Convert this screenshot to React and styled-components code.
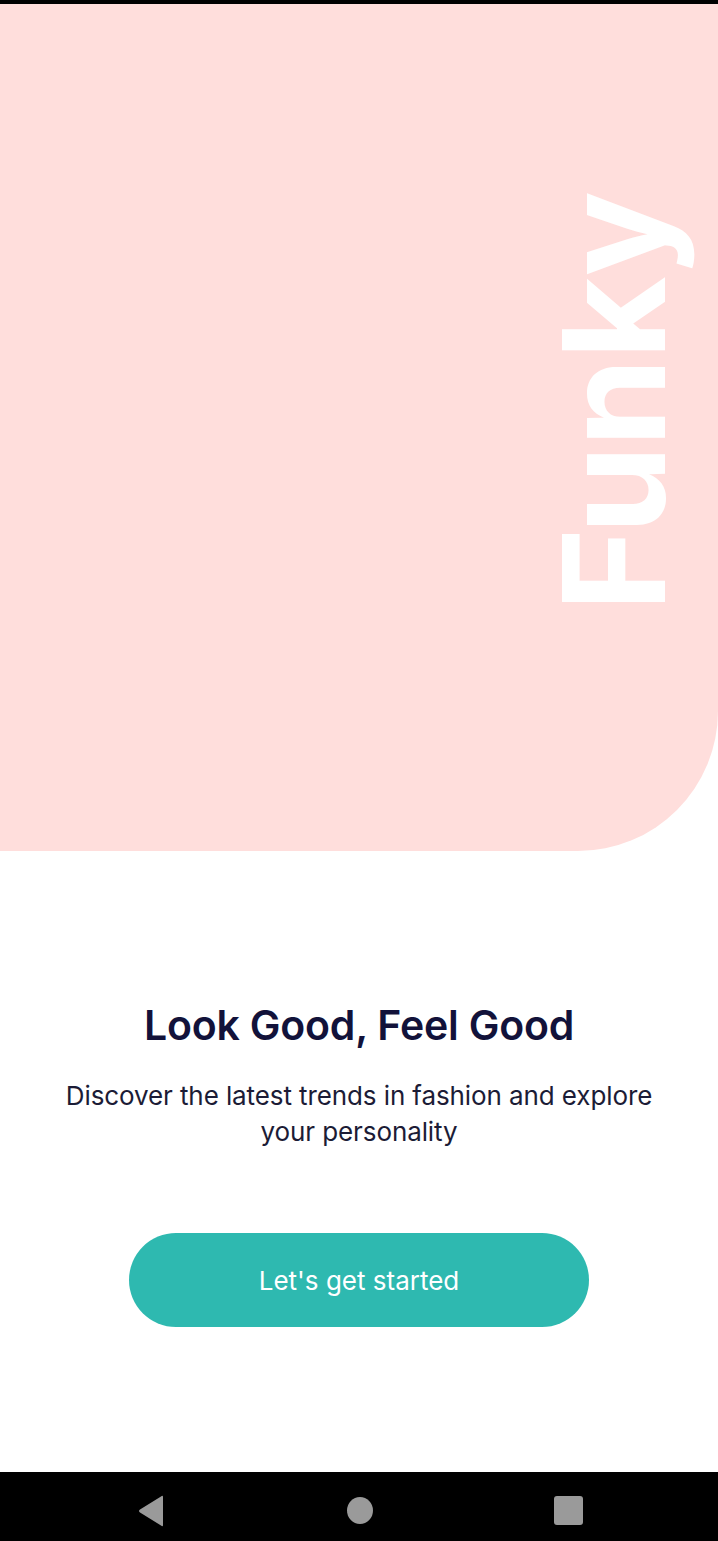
import React from "react";
import styled, { createGlobalStyle } from "styled-components";

const GlobalStyle = createGlobalStyle`
  * {
    box-sizing: border-box;
  }
  html, body {
    margin: 0;
    padding: 0;
    background: #ffffff;
    font-family: Inter, "Noto Sans", "Liberation Sans", sans-serif;
  }
`;

const Screen = styled.div`
  display: flex;
  flex-direction: column;
  height: 1541px;
  background: #ffffff;
  overflow: hidden;
`;

const StatusBar = styled.div`
  height: 4px;
  background: #000000;
  flex-shrink: 0;
`;

const Hero = styled.div`
  height: 847px;
  flex-shrink: 0;
  background: #ffdedc;
  border-bottom-right-radius: 140px;
  display: flex;
  justify-content: flex-end;
  align-items: flex-start;
  padding-top: 188px;
  padding-right: 34px;
`;

const Brand = styled.h1`
  margin: 0;
  writing-mode: vertical-rl;
  transform: rotate(180deg);
  color: #ffffff;
  font-size: 142px;
  font-weight: 700;
  line-height: 1;
  letter-spacing: -1px;
`;

const Content = styled.main`
  flex: 1;
  display: flex;
  flex-direction: column;
  align-items: center;
  padding-top: 150px;
`;

const Title = styled.h2`
  margin: 0;
  font-size: 41px;
  font-weight: 600;
  line-height: 48px;
  color: #12123a;
  letter-spacing: -0.2px;
`;

const Subtitle = styled.p`
  margin: 29px 0 0;
  width: 620px;
  text-align: center;
  font-size: 26px;
  font-weight: 400;
  line-height: 36px;
  color: #1c1c36;
  letter-spacing: -0.1px;
`;

const StartButton = styled.button`
  margin-top: 83px;
  width: 460px;
  height: 94px;
  border: none;
  border-radius: 47px;
  background: #2eb9b0;
  color: #ffffff;
  font-family: inherit;
  font-size: 26px;
  font-weight: 400;
  cursor: pointer;
`;

const NavBar = styled.nav`
  height: 69px;
  flex-shrink: 0;
  background: #000000;
  display: grid;
  grid-template-columns: 1fr 1fr 1fr;
  align-items: center;
  padding: 8px 45px 0 47px;
`;

const NavItem = styled.div`
  display: flex;
  justify-content: center;
`;

const App = () => {
  return (
    <>
      <GlobalStyle />
      <Screen>
        <StatusBar />
        <Hero>
          <Brand>Funky</Brand>
        </Hero>
        <Content>
          <Title>Look Good, Feel Good</Title>
          <Subtitle>
            Discover the latest trends in fashion and explore your personality
          </Subtitle>
          <StartButton>Let's get started</StartButton>
        </Content>
        <NavBar>
          <NavItem>
            <svg width="28" height="32" viewBox="0 0 28 32">
              <path
                d="M26 2 L26 30 Q26 32 24 30.6 L3 17.4 Q1 16 3 14.6 L24 1.4 Q26 0 26 2 Z"
                fill="#9a9a9a"
              />
            </svg>
          </NavItem>
          <NavItem>
            <svg width="26" height="27" viewBox="0 0 26 27">
              <ellipse cx="13" cy="13.5" rx="13" ry="13.5" fill="#9a9a9a" />
            </svg>
          </NavItem>
          <NavItem>
            <svg width="29" height="29" viewBox="0 0 29 29">
              <rect x="0" y="0" width="29" height="29" rx="3" fill="#9a9a9a" />
            </svg>
          </NavItem>
        </NavBar>
      </Screen>
    </>
  );
};

export default App;
